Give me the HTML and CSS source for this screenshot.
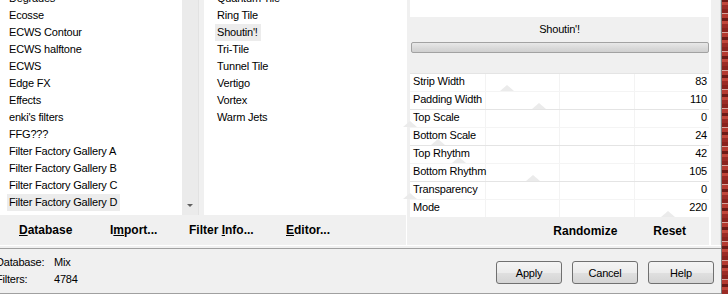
FILE: index.html
```html
<!DOCTYPE html>
<html lang="en">
<head>
  <meta charset="UTF-8">
  <title>Filters Unlimited</title>
  <link rel="stylesheet" href="styles.css">
</head>
<body>
  <div class="dialog">
    <div class="top">
      <div class="browser">
        <div class="lists">
          <div class="list cats">
            <ul class="items">
              <li>Dégradés</li>
              <li>Ecosse</li>
              <li>ECWS Contour</li>
              <li>ECWS halftone</li>
              <li>ECWS</li>
              <li>Edge FX</li>
              <li>Effects</li>
              <li>enki's filters</li>
              <li>FFG???</li>
              <li>Filter Factory Gallery A</li>
              <li>Filter Factory Gallery B</li>
              <li>Filter Factory Gallery C</li>
              <li class="selected">Filter Factory Gallery D</li>
              <li>Filter Factory Gallery E</li>
            </ul>
          </div>
          <div class="scrollbar"><span class="arrow-down"></span></div>
          <div class="list filters">
            <ul class="items">
              <li>Quantum Tile</li>
              <li>Ring Tile</li>
              <li class="selected">Shoutin'!</li>
              <li>Tri-Tile</li>
              <li>Tunnel Tile</li>
              <li>Vertigo</li>
              <li>Vortex</li>
              <li>Warm Jets</li>
            </ul>
          </div>
        </div>
        <div class="toolbar">
          <span class="tool t-db"><u>D</u>atabase</span>
          <span class="tool t-import">I<u>m</u>port...</span>
          <span class="tool t-info">Filter <u>I</u>nfo...</span>
          <span class="tool"><u>E</u>ditor...</span>
        </div>
      </div>

      <div class="params">
        <div class="params-blank"></div>
        <div class="params-head">
          <div class="filter-name">Shoutin'!</div>
          <div class="preview-bar"></div>
        </div>
        <div class="sliders">
          <div class="slider"><span class="name">Strip Width</span><span class="val">83</span><span class="thumb" style="left: 32.5%"></span></div>
          <div class="slider"><span class="name">Padding Width</span><span class="val">110</span><span class="thumb" style="left: 43.1%"></span></div>
          <div class="slider"><span class="name">Top Scale</span><span class="val">0</span><span class="thumb" style="left: 0%"></span></div>
          <div class="slider"><span class="name">Bottom Scale</span><span class="val">24</span><span class="thumb" style="left: 9.4%"></span></div>
          <div class="slider"><span class="name">Top Rhythm</span><span class="val">42</span><span class="thumb" style="left: 16.5%"></span></div>
          <div class="slider"><span class="name">Bottom Rhythm</span><span class="val">105</span><span class="thumb" style="left: 41.2%"></span></div>
          <div class="slider"><span class="name">Transparency</span><span class="val">0</span><span class="thumb" style="left: 0%"></span></div>
          <div class="slider"><span class="name">Mode</span><span class="val">220</span><span class="thumb" style="left: 86.3%"></span></div>
        </div>
        <div class="params-bar">
          <span class="tool">Randomize</span>
          <span class="tool">Reset</span>
        </div>
      </div>
      <div class="margin-right"></div>
    </div>

    <div class="bottom">
      <div class="status">
        <div class="stat"><span class="key">Database:</span><span>Mix</span></div>
        <div class="stat"><span class="key">Filters:</span><span>4784</span></div>
      </div>
      <div class="actions">
        <button type="button">Apply</button>
        <button type="button">Cancel</button>
        <button type="button">Help</button>
      </div>
    </div>
  </div>
  <div class="texture"></div>
</body>
</html>
```

FILE: styles.css
```css
body {
  margin: 0;
  width: 728px;
  height: 294px;
  overflow: hidden;
  display: flex;
  background: #f0f0f0;
  font-family: 'Liberation Sans', Arial, sans-serif;
  font-size: 11px;
  letter-spacing: -0.2px;
  color: #000;
}
.dialog {
  width: 722px;
  display: flex;
  flex-direction: column;
}
.top {
  display: flex;
  height: 245px;
  border-bottom: 1px solid #fff;
}

/* left side: category + filter lists */
.browser {
  width: 406px;
  display: flex;
  flex-direction: column;
  border-right: 1px solid #fff;
}
.lists {
  display: flex;
  height: 215px;
}
.list {
  background: #fff;
  overflow: hidden;
}
.cats {
  width: 182px;
}
.filters {
  flex: 1;
  margin-left: 5px;
}
.items {
  list-style: none;
  margin: -10px 0 0 0;
  padding: 0;
}
.items li {
  height: 17px;
  line-height: 17px;
  white-space: nowrap;
}
.cats .items li {
  padding-left: 9px;
}
.filters .items li {
  padding-left: 13px;
}
.items li.selected {
  background: #ececec;
  display: table;
  padding-right: 3px;
}
.cats .items li.selected {
  margin-left: 7px;
  padding-left: 2px;
}
.filters .items li.selected {
  margin-left: 11px;
  padding-left: 2px;
}
.scrollbar {
  width: 17px;
  background: #ebebeb;
  border-right: 1px solid #e2e2e2;
  display: flex;
  align-items: flex-end;
  justify-content: center;
  padding-bottom: 8px;
  box-sizing: border-box;
}
.arrow-down {
  width: 0;
  height: 0;
  border-left: 3px solid transparent;
  border-right: 3px solid transparent;
  border-top: 3px solid #606060;
}
.toolbar {
  flex: 1;
  display: flex;
  align-items: center;
  padding-left: 19px;
}
.tool {
  font-size: 12px;
  font-weight: bold;
  letter-spacing: 0;
}
.t-db {
  width: 91px;
}
.t-import {
  width: 79px;
}
.t-info {
  width: 97px;
}

/* right side: parameters */
.params {
  width: 299px;
  margin-left: 3px;
  display: flex;
  flex-direction: column;
  background: #fff;
}
.params-blank {
  height: 17px;
}
.params-head {
  height: 56px;
  background: #f0f0f0;
}
.filter-name {
  text-align: center;
  padding-top: 6px;
  height: 19px;
  line-height: 13px;
}
.preview-bar {
  height: 9px;
  margin: 0 0 0 1px;
  border: 1px solid #a2a2a2;
  border-radius: 2px;
  background: linear-gradient(#e8e8e8, #d8d8d8 60%, #d0d0d0);
}
.sliders {
  height: 144px;
}
.slider {
  position: relative;
  height: 18px;
  display: flex;
  align-items: flex-start;
  justify-content: space-between;
  line-height: 14px;
  padding: 0 2px 0 3px;
  box-sizing: border-box;
  border-top: 1px solid #f4f4f4;
  background:
    linear-gradient(90deg, transparent 25%, #f3f3f3 25%, #f3f3f3 calc(25% + 1px), transparent calc(25% + 1px),
      transparent 50%, #f3f3f3 50%, #f3f3f3 calc(50% + 1px), transparent calc(50% + 1px),
      transparent 75%, #f3f3f3 75%, #f3f3f3 calc(75% + 1px), transparent calc(75% + 1px));
}
.slider:nth-child(odd) {
  border-top-color: #e4e4e4;
}
.slider .name,
.slider .val {
  position: relative;
  z-index: 1;
}
.thumb {
  position: absolute;
  bottom: 0;
  margin-left: -7px;
  width: 0;
  height: 0;
  border-left: 7px solid transparent;
  border-right: 7px solid transparent;
  border-bottom: 6px solid #ebebeb;
}
.params-bar {
  flex: 1;
  background: #f0f0f0;
  display: flex;
  align-items: center;
  justify-content: flex-end;
  gap: 36px;
  padding-right: 23px;
}
.margin-right {
  flex: 1;
  border-left: 2px solid #fff;
  border-right: 1px solid #d8d8d8;
}

/* bottom status + buttons */
.bottom {
  display: flex;
  justify-content: space-between;
  height: 44px;
  margin-top: 2px;
  border-top: 1px solid #a0a0a0;
  border-bottom: 1px solid #a0a0a0;
}
.status {
  padding-top: 5px;
  margin-left: -4px;
}
.stat {
  display: flex;
  height: 17px;
  line-height: 17px;
}
.key {
  width: 58px;
}
.actions {
  display: flex;
  gap: 10px;
  padding-top: 12px;
  margin-right: 7px;
}
.actions button {
  width: 66px;
  height: 23px;
  border: 1px solid #707070;
  border-radius: 3px;
  background: linear-gradient(#f4f4f4, #ececec 50%, #e0e0e0 51%, #d4d4d4);
  font-family: 'Liberation Sans', Arial, sans-serif;
  font-size: 11px;
  letter-spacing: -0.2px;
  color: #000;
  padding: 0;
}
.texture {
  width: 6px;
  border-left: 1px solid #7a7a7a;
  background:
    repeating-linear-gradient(0deg, #9b2b25 0 4px, #c0463a 4px 7px, #6e1a16 7px 10px, #b43a30 10px 14px, #d8a49c 14px 15px, #8a221d 15px 19px);
}
```
